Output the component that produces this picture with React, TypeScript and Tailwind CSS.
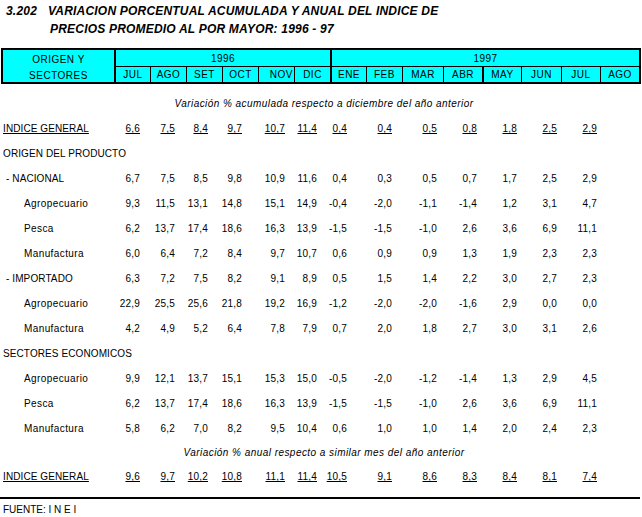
type Row =
  | { kind: "note"; text: string }
  | { kind: "data"; label: string; indent: "none" | "dash" | "sub"; values?: string[]; underline?: boolean };

const rows: Row[] = [
  { kind: "note", text: "Variación % acumulada respecto a diciembre del año anterior" },
  { kind: "data", label: "INDICE GENERAL", indent: "none", underline: true, values: ["6,6", "7,5", "8,4", "9,7", "10,7", "11,4", "0,4", "0,4", "0,5", "0,8", "1,8", "2,5", "2,9"] },
  { kind: "data", label: "ORIGEN DEL PRODUCTO", indent: "none" },
  { kind: "data", label: "- NACIONAL", indent: "dash", values: ["6,7", "7,5", "8,5", "9,8", "10,9", "11,6", "0,4", "0,3", "0,5", "0,7", "1,7", "2,5", "2,9"] },
  { kind: "data", label: "Agropecuario", indent: "sub", values: ["9,3", "11,5", "13,1", "14,8", "15,1", "14,9", "-0,4", "-2,0", "-1,1", "-1,4", "1,2", "3,1", "4,7"] },
  { kind: "data", label: "Pesca", indent: "sub", values: ["6,2", "13,7", "17,4", "18,6", "16,3", "13,9", "-1,5", "-1,5", "-1,0", "2,6", "3,6", "6,9", "11,1"] },
  { kind: "data", label: "Manufactura", indent: "sub", values: ["6,0", "6,4", "7,2", "8,4", "9,7", "10,7", "0,6", "0,9", "0,9", "1,3", "1,9", "2,3", "2,3"] },
  { kind: "data", label: "- IMPORTADO", indent: "dash", values: ["6,3", "7,2", "7,5", "8,2", "9,1", "8,9", "0,5", "1,5", "1,4", "2,2", "3,0", "2,7", "2,3"] },
  { kind: "data", label: "Agropecuario", indent: "sub", values: ["22,9", "25,5", "25,6", "21,8", "19,2", "16,9", "-1,2", "-2,0", "-2,0", "-1,6", "2,9", "0,0", "0,0"] },
  { kind: "data", label: "Manufactura", indent: "sub", values: ["4,2", "4,9", "5,2", "6,4", "7,8", "7,9", "0,7", "2,0", "1,8", "2,7", "3,0", "3,1", "2,6"] },
  { kind: "data", label: "SECTORES ECONOMICOS", indent: "none" },
  { kind: "data", label: "Agropecuario", indent: "sub", values: ["9,9", "12,1", "13,7", "15,1", "15,3", "15,0", "-0,5", "-2,0", "-1,2", "-1,4", "1,3", "2,9", "4,5"] },
  { kind: "data", label: "Pesca", indent: "sub", values: ["6,2", "13,7", "17,4", "18,6", "16,3", "13,9", "-1,5", "-1,5", "-1,0", "2,6", "3,6", "6,9", "11,1"] },
  { kind: "data", label: "Manufactura", indent: "sub", values: ["5,8", "6,2", "7,0", "8,2", "9,5", "10,4", "0,6", "1,0", "1,0", "1,4", "2,0", "2,4", "2,3"] },
  { kind: "note", text: "Variación % anual respecto a similar mes del año anterior" },
  { kind: "data", label: "INDICE GENERAL", indent: "none", underline: true, values: ["9,6", "9,7", "10,2", "10,8", "11,1", "11,4", "10,5", "9,1", "8,6", "8,3", "8,4", "8,1", "7,4"] },
];

// widths of the number cells, values sit flush right
const cellW = [
  "w-[25px]", "w-[35px]", "w-[33px]", "w-[34px]", "w-[43px]", "w-[32px]", "w-[30px]",
  "w-[45px]", "w-[45px]", "w-[40px]", "w-[40px]", "w-[40px]", "w-[40px]",
];

const indentCls = {
  none: "pl-[3px] tracking-[0.1px]",
  dash: "pl-[6px] tracking-[0.1px]",
  sub: "pl-[24px] tracking-[0.4px]",
};

const Header = () => (
  <div className="ml-[1px] mt-[10px] flex h-[36px] w-[640px] border-2 border-black bg-[#00ffff] text-[10px] tracking-[0.5px]">
    <div className="flex w-[113px] flex-col border-r-2 border-black">
      <div className="flex h-[17px] items-center justify-center pt-[1px]">ORIGEN Y</div>
      <div className="flex h-[15px] items-center justify-center pt-[1px]">SECTORES</div>
    </div>
    <div className="flex w-[216px] flex-col border-r-2 border-black">
      <div className="flex h-[17px] items-center justify-center border-b border-black pt-[1px]">1996</div>
      <div className="flex h-[15px]">
        <div className="flex w-[35px] items-center justify-center border-r border-black">JUL</div>
        <div className="flex w-[36px] items-center justify-center border-r border-black">AGO</div>
        <div className="flex w-[36px] items-center justify-center border-r border-black">SET</div>
        <div className="flex w-[36px] items-center justify-center border-r border-black">OCT</div>
        <div className="flex w-[36px] items-center justify-end border-r border-black pr-[1px]">NOV</div>
        <div className="flex w-[35px] items-center justify-center">DIC</div>
      </div>
    </div>
    <div className="flex flex-1 flex-col">
      <div className="flex h-[17px] items-center justify-center border-b border-black pt-[1px]">1997</div>
      <div className="flex h-[15px]">
        <div className="flex w-[35px] items-center justify-center border-r border-black">ENE</div>
        <div className="flex w-[36px] items-center justify-center border-r border-black">FEB</div>
        <div className="flex w-[41px] items-center justify-center border-r border-black">MAR</div>
        <div className="flex w-[40px] items-center justify-center border-r-2 border-black">ABR</div>
        <div className="flex w-[38px] items-center justify-center border-r border-black">MAY</div>
        <div className="flex w-[40px] items-center justify-center border-r border-black">JUN</div>
        <div className="flex w-[39px] items-center justify-center border-r border-black">JUL</div>
        <div className="flex w-[38px] items-center justify-center">AGO</div>
      </div>
    </div>
  </div>
);

const BodyRow = ({ row, h }: { row: Row; h: string }) => {
  if (row.kind === "note") {
    return (
      <div className={`flex ${h} w-[640px] items-center justify-center pl-[8px] text-[10px] italic tracking-[0.45px]`}>
        {row.text}
      </div>
    );
  }
  return (
    <div className={`flex ${h} items-center whitespace-nowrap text-[10px]`}>
      <div className={`w-[115px] ${indentCls[row.indent]}`}>
        <span className={row.underline ? "underline" : ""}>{row.label}</span>
      </div>
      {row.values?.map((v, i) => (
        <div key={i} className={`${cellW[i]} text-right tracking-[0.2px]`}>
          <span className={row.underline ? "underline" : ""}>{v}</span>
        </div>
      ))}
    </div>
  );
};

export default function App() {
  return (
    <div className="relative h-[517px] w-[642px] overflow-hidden bg-white font-['Liberation_Sans',Arial,sans-serif] text-black">
      <div className="pt-[2px] text-[12px] font-bold italic leading-[18px] tracking-[0.2px]">
        <div className="flex">
          <span className="w-[48px] pl-[6px]">3.202</span>
          <span>VARIACION PORCENTUAL ACUMULADA Y ANUAL DEL INDICE DE</span>
        </div>
        <div className="pl-[50px]">PRECIOS PROMEDIO AL POR MAYOR: 1996 - 97</div>
      </div>

      <Header />

      <div className="mt-[7px] flex flex-col">
        {rows.map((r, i) => (
          <BodyRow key={i} row={r} h={i === 14 ? "h-[23px]" : "h-[25px]"} />
        ))}
      </div>

      <div className="mt-[8px] h-[2px] w-[640px] bg-black" />
      <div className="flex h-[20px] items-center pl-[3px] text-[10px]">FUENTE: I N E I</div>
    </div>
  );
}
